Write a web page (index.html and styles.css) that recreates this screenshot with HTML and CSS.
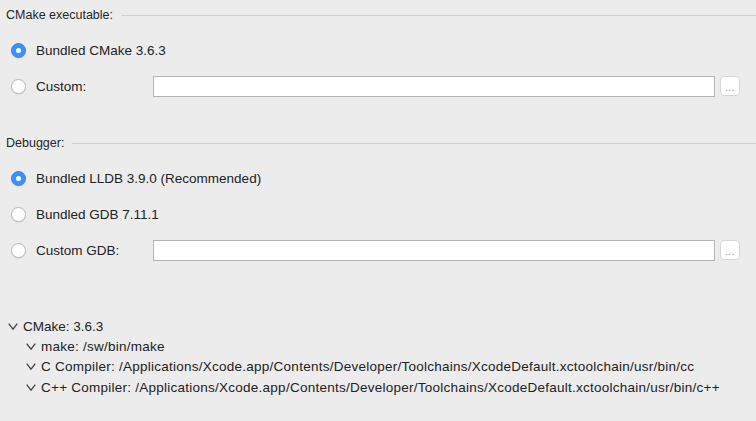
FILE: index.html
```html
<!DOCTYPE html>
<html>
<head>
<meta charset="utf-8">
<link rel="stylesheet" href="styles.css">
</head>
<body>
<div class="page">
  <div class="section-title first"><span class="title-text">CMake executable:</span><span class="title-line"></span></div>
  <div class="radio-row"><span class="radio checked"></span><span class="radio-label">Bundled CMake 3.6.3</span></div>
  <div class="radio-row"><span class="radio"></span><span class="radio-label fixed">Custom:</span><span class="field"></span><span class="browse">...</span></div>

  <div class="section-title second"><span class="title-text">Debugger:</span><span class="title-line"></span></div>
  <div class="radio-row"><span class="radio checked"></span><span class="radio-label">Bundled LLDB 3.9.0 (Recommended)</span></div>
  <div class="radio-row"><span class="radio"></span><span class="radio-label">Bundled GDB 7.11.1</span></div>
  <div class="radio-row"><span class="radio"></span><span class="radio-label fixed">Custom GDB:</span><span class="field"></span><span class="browse">...</span></div>

  <div class="tree">
    <div class="tree-row"><svg class="chev" width="10" height="7" viewBox="0 0 10 7"><polyline points="0.7,0.7 5,6.2 9.3,0.7" fill="none" stroke="#444" stroke-width="1.3"/></svg><span>CMake: 3.6.3</span></div>
    <div class="tree-row child"><svg class="chev" width="10" height="7" viewBox="0 0 10 7"><polyline points="0.7,0.7 5,6.2 9.3,0.7" fill="none" stroke="#444" stroke-width="1.3"/></svg><span class="path">make: /sw/bin/make</span></div>
    <div class="tree-row child"><svg class="chev" width="10" height="7" viewBox="0 0 10 7"><polyline points="0.7,0.7 5,6.2 9.3,0.7" fill="none" stroke="#444" stroke-width="1.3"/></svg><span class="path">C Compiler: /Applications/Xcode.app/Contents/Developer/Toolchains/XcodeDefault.xctoolchain/usr/bin/cc</span></div>
    <div class="tree-row child"><svg class="chev" width="10" height="7" viewBox="0 0 10 7"><polyline points="0.7,0.7 5,6.2 9.3,0.7" fill="none" stroke="#444" stroke-width="1.3"/></svg><span class="path">C++ Compiler: /Applications/Xcode.app/Contents/Developer/Toolchains/XcodeDefault.xctoolchain/usr/bin/c++</span></div>
  </div>
</div>
</body>
</html>
```
FILE: styles.css
```css
html, body {
  margin: 0;
  padding: 0;
  background: #ececec;
}
body {
  width: 756px;
  height: 421px;
  overflow: hidden;
  font-family: "Liberation Sans", Arial, sans-serif;
  color: #222;
}
.page {
  display: flex;
  flex-direction: column;
}
.section-title {
  height: 30px;
  display: flex;
  align-items: center;
  padding-left: 6px;
  font-size: 12.5px;
  color: #262626;
}
.section-title.first {
  margin-top: 0;
  margin-bottom: 2px;
}
.section-title.second {
  margin-top: 24px;
  margin-bottom: 2px;
}
.title-line {
  flex: 1;
  height: 1px;
  background: #d2d2d2;
  margin-left: 8px;
}
.radio-row {
  height: 36px;
  display: flex;
  align-items: center;
  padding-left: 11px;
  padding-right: 16px;
  font-size: 13.5px;
}
.radio {
  width: 15px;
  height: 15px;
  box-sizing: border-box;
  border-radius: 50%;
  background: #fff;
  border: 1px solid #b9b9b9;
  box-shadow: 0 0.5px 1px rgba(0, 0, 0, 0.12);
  flex: none;
  display: flex;
  align-items: center;
  justify-content: center;
}
.radio.checked {
  background: #3d8ff9;
  border-color: #3787f2;
}
.radio.checked::after {
  content: "";
  width: 5px;
  height: 5px;
  border-radius: 50%;
  background: #fff;
}
.radio-label {
  margin-left: 10px;
  color: #222;
}
.radio-label.fixed {
  width: 117px;
  flex: none;
}
.field {
  flex: 1;
  height: 21px;
  box-sizing: border-box;
  background: #fff;
  border: 1px solid #b4b4b4;
}
.browse {
  flex: none;
  width: 20px;
  height: 20px;
  box-sizing: border-box;
  margin-left: 5px;
  background: #fff;
  border: 1px solid #d6d6d6;
  border-radius: 4px;
  font-size: 10px;
  color: #888;
  display: flex;
  align-items: flex-end;
  justify-content: center;
  line-height: 14px;
  letter-spacing: 0.5px;
}
.tree {
  margin-top: 48px;
  display: flex;
  flex-direction: column;
  font-size: 13.5px;
}
.tree-row {
  height: 20.4px;
  display: flex;
  align-items: center;
  padding-left: 8px;
  white-space: nowrap;
}
.tree-row.child {
  padding-left: 26px;
}
.path {
  letter-spacing: 0.25px;
}
.chev {
  flex: none;
  margin-right: 5px;
}
```
